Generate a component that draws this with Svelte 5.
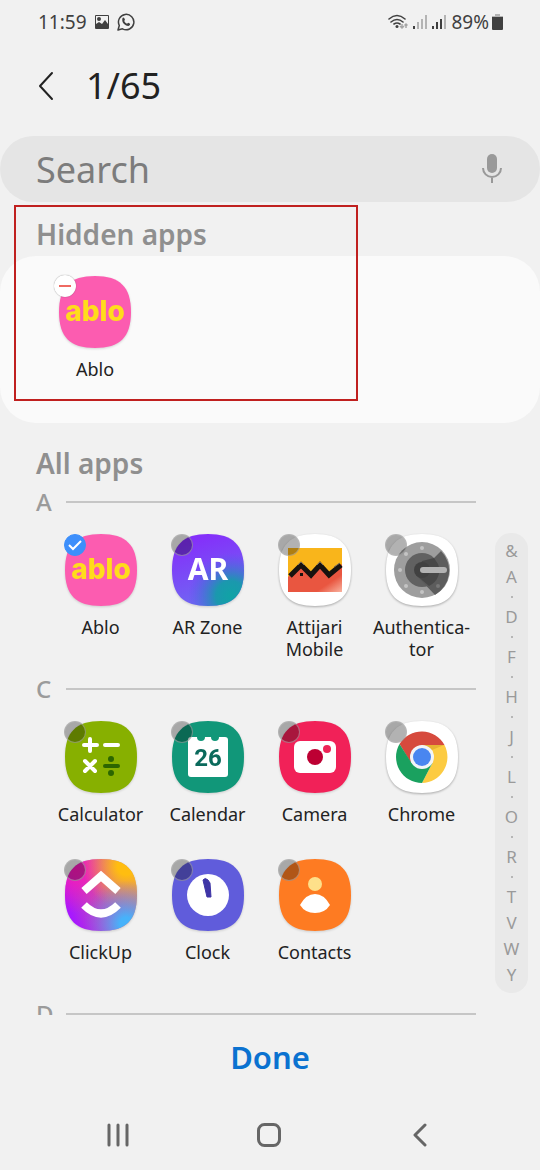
<script lang="ts">
  type App = { id: string; name: string; hidden?: boolean };

  const total = 65;

  let query = $state('');
  let groups = $state<{ letter: string; apps: App[] }[]>([
    {
      letter: 'A',
      apps: [
        { id: 'ablo', name: 'Ablo', hidden: true },
        { id: 'arzone', name: 'AR Zone' },
        { id: 'attijari', name: 'Attijari\nMobile' },
        { id: 'authenticator', name: 'Authentica-\ntor' }
      ]
    },
    {
      letter: 'C',
      apps: [
        { id: 'calculator', name: 'Calculator' },
        { id: 'calendar', name: 'Calendar' },
        { id: 'camera', name: 'Camera' },
        { id: 'chrome', name: 'Chrome' },
        { id: 'clickup', name: 'ClickUp' },
        { id: 'clock', name: 'Clock' },
        { id: 'contacts', name: 'Contacts' }
      ]
    },
    { letter: 'D', apps: [] }
  ]);

  let hiddenApps = $derived(groups.flatMap((g) => g.apps).filter((a) => a.hidden));

  const index = '&A.D.F.H.J.L.O.R.TVWY'.split('');
  const squircle = 'M36 0C61 0 72 11 72 36S61 72 36 72 0 61 0 36 11 0 36 0Z';
</script>

{#snippet appIcon(id: string)}
  <svg class="app-icon" class:plain={['attijari', 'authenticator', 'chrome'].includes(id)} viewBox="0 0 72 72" aria-hidden="true">
    {#if id === 'ablo'}
      <path d={squircle} fill="#fc5cb0" />
      <text class="ablo" x="36" y="45" text-anchor="middle">ablo</text>
    {:else if id === 'arzone'}
      <defs>
        <linearGradient id="ar-base" x1="0.2" y1="0" x2="0.5" y2="1">
          <stop offset="0.1" stop-color="#8430fa" />
          <stop offset="1" stop-color="#6f69f2" />
        </linearGradient>
        <radialGradient id="ar-teal" cx="0.82" cy="0.86" r="0.6">
          <stop offset="0" stop-color="#10a3a5" />
          <stop offset="0.35" stop-color="#1b98ae" />
          <stop offset="1" stop-color="#4d5be8" stop-opacity="0" />
        </radialGradient>
      </defs>
      <path d={squircle} fill="url(#ar-base)" />
      <path d={squircle} fill="url(#ar-teal)" />
      <text class="ar" x="36" y="46" text-anchor="middle">AR</text>
    {:else if id === 'attijari'}
      <defs>
        <linearGradient id="att-red" x1="0.5" y1="0.4" x2="1" y2="1">
          <stop offset="0.6" stop-color="#e95640" />
          <stop offset="1" stop-color="#f9b3a0" />
        </linearGradient>
      </defs>
      <path d={squircle} fill="#fff" />
      <path d="M9 14h54v44H9z" fill="url(#att-red)" />
      <path d="M9 14h54v16L50 41 41 31l-9 10-10-10-13 12z" fill="#f9b51b" />
      <path d="M11 42L22 31l10 10 9-10 9 10 12-10" fill="none" stroke="#17120f" stroke-width="5" />
      <path d="M19 31l3-3 3 3M38 31l3-3 3 3M55 33l6-4" fill="none" stroke="#75695c" stroke-width="1" />
      <path d="M18 41l4-4 4 4v2h-8z" fill="#e95640" />
      <path d="M21 39h3v3h-3z" fill="#17120f" />
    {:else if id === 'authenticator'}
      <path d={squircle} fill="#fff" />
      <circle cx="36" cy="36" r="28" fill="#9e9e9e" />
      <circle cx="36" cy="36" r="17" fill="#616161" />
      <path d="M55 17a28 28 0 0 1-6 44L30 41l5-9 13-8z" fill="#5c5c5c" />
      <path d="M52 30a17 17 0 0 1-9 22L30 41l6-14 12-3z" fill="#484848" />
      <circle cx="36" cy="36" r="8" fill="#414141" />
      <g fill="#c4c4c4">
        <circle cx="36" cy="14" r="2" /><circle cx="36" cy="58" r="2" /><circle cx="14" cy="36" r="2" />
        <circle cx="20" cy="20" r="2" /><circle cx="20" cy="52" r="2" />
      </g>
      <circle cx="52" cy="52" r="2" fill="#777" />
      <rect x="34" y="33" width="27" height="6" rx="3" fill="#b3b3b3" />
    {:else if id === 'calculator'}
      <path d={squircle} fill="#87b000" />
      <g fill="none" stroke="#fff" stroke-width="4" stroke-linecap="round">
        <path d="M25 18v12M19 24h13M40 24h13M20 40l10 10M30 40L20 50" />
        <path d="M40 45h13" stroke="#2c6600" />
      </g>
      <circle cx="46" cy="38" r="3" fill="#2c6600" />
      <circle cx="46" cy="52" r="3" fill="#2c6600" />
    {:else if id === 'calendar'}
      <path d={squircle} fill="#119779" />
      <rect x="16" y="16" width="40" height="40" rx="3" fill="#fff" />
      <circle cx="29" cy="16" r="4" fill="#119779" /><circle cx="43" cy="16" r="4" fill="#119779" />
      <text class="date" x="36" y="45" text-anchor="middle">26</text>
    {:else if id === 'camera'}
      <path d={squircle} fill="#f12158" />
      <rect x="15" y="20" width="42" height="32" rx="6" fill="#fff" />
      <circle cx="36" cy="36" r="8" fill="#bd0033" />
      <circle cx="48" cy="28" r="4" fill="#ed2457" />
    {:else if id === 'chrome'}
      <path d={squircle} fill="#fff" />
      <path d="M13.500 23A26 26 0 0 1 58.500 24H36L25 42z" fill="#d64a3d" />
      <path d="M58.500 24A26 26 0 0 1 36 62L46.400 42 46.400 30 36 24z" fill="#fccb42" />
      <path d="M13.500 23A26 26 0 0 0 36 62L46.400 42H25.600z" fill="#1aa15f" />
      <path d="M36 24h22l-12 5z" fill="#e7b432" />
      <circle cx="36" cy="36" r="12" fill="#f2f4f7" />
      <circle cx="36" cy="36" r="9" fill="#4986f0" />
    {:else if id === 'clickup'}
      <defs>
        <linearGradient id="cu-base" x1="0" y1="0.7" x2="1" y2="0.3">
          <stop offset="0.05" stop-color="#a818ff" />
          <stop offset="0.5" stop-color="#c45ca8" />
          <stop offset="1" stop-color="#d5a062" />
        </linearGradient>
        <radialGradient id="cu-pink" cx="0.15" cy="0.15" r="0.6">
          <stop offset="0" stop-color="#fb16b8" />
          <stop offset="1" stop-color="#fb16b8" stop-opacity="0" />
        </radialGradient>
        <radialGradient id="cu-gold" cx="0.85" cy="0.1" r="0.6">
          <stop offset="0.2" stop-color="#ffbd10" />
          <stop offset="1" stop-color="#ff9440" stop-opacity="0" />
        </radialGradient>
        <radialGradient id="cu-blue" cx="0.85" cy="0.9" r="0.6">
          <stop offset="0.15" stop-color="#47b2fa" />
          <stop offset="1" stop-color="#7b61ff" stop-opacity="0" />
        </radialGradient>
      </defs>
      <path d={squircle} fill="url(#cu-base)" />
      <path d={squircle} fill="url(#cu-pink)" />
      <path d={squircle} fill="url(#cu-gold)" />
      <path d={squircle} fill="url(#cu-blue)" />
      <path d="M19 32l17-15 17 15M19 46q17 17 34 0" fill="none" stroke="#fff" stroke-width="8" />
    {:else if id === 'clock'}
      <path d={squircle} fill="#605cdb" />
      <circle cx="36" cy="36" r="21" fill="#fff" />
      <path d="M31 21q2-3 5 0l2 3 1 14h-4z" fill="#3e35a6" stroke="#3e35a6" stroke-width="1" stroke-linejoin="round" />
    {:else if id === 'contacts'}
      <path d={squircle} fill="#fe7b22" />
      <circle cx="36" cy="25" r="7" fill="#fee08a" />
      <path d="M21 46Q27 35 36 35T51 46Q46 54 36 54T21 46Z" fill="#fff" />
    {/if}
  </svg>
{/snippet}

<div class="screen">
  <div class="status">
    <span>11:59</span>
    <svg width="16" height="16" viewBox="0 0 16 16" aria-hidden="true">
      <path fill-rule="evenodd" d="M2 1h12q1 0 1 1v12q0 1-1 1H2q-1 0-1-1V2q0-1 1-1zm0 1v8l3-2 3 2 3-4 3 4V2zM5 3a2 2 0 1 1 0 4 2 2 0 0 1 0-4z" fill="#404040" />
    </svg>
    <svg width="18" height="18" viewBox="0 0 18 18" aria-hidden="true">
      <path d="M1 17l1.300-4.500A7.700 7.700 0 1 1 5.500 15.800z" fill="none" stroke="#404040" stroke-width="1.500" stroke-linejoin="round" />
      <path d="M5.500 5q1-1 1.700 0l.8 1.700-.8 1.300q1 2 2.800 2.700l1.200-1 1.900 1q.5 1.500-1.600 2.300-2 .3-4.500-2T5.500 5z" fill="#404040" />
    </svg>
    <div class="signals">
      <svg width="20" height="18" viewBox="0 0 20 18" aria-hidden="true">
        <g fill="none" stroke="#404040" stroke-width="1.600" stroke-linecap="round">
          <path d="M1 6Q9-1 17 6M3 9q6-5 12 0M6 11q3-2 6 0" />
        </g>
        <circle cx="9" cy="13.500" r="1.500" fill="#404040" />
        <path d="M14 11v4M12 13l2 2 2-2M18 15v-4M16.500 12.500L18 11l1.500 1.500" fill="none" stroke="#a5a5a5" stroke-width="1.500" />
      </svg>
      <svg width="14" height="16" viewBox="0 0 14 16" aria-hidden="true">
        <path d="M0 12h2v3H0z" fill="#404040" /><path d="M4 8h2v7H4zM8 5h2v10H8zM12 1h2v14h-2z" fill="#b4b4b4" />
      </svg>
      <svg width="14" height="16" viewBox="0 0 14 16" aria-hidden="true">
        <path d="M0 12h2v3H0zM4 8h2v7H4zM8 5h2v10H8z" fill="#404040" /><path d="M12 1h2v14h-2z" fill="#b4b4b4" />
      </svg>
      <span class="battery">
        89%
        <svg width="11" height="16" viewBox="0 0 11 16" aria-hidden="true">
          <path d="M3 0h5v2h3v2H0V2h3z" fill="#b4b4b4" /><path d="M0 3h11v12q0 1-1 1H1q-1 0-1-1z" fill="#404040" />
        </svg>
      </span>
    </div>
  </div>

  <header class="header">
    <button class="back" aria-label="Back">
      <svg width="16" height="30" viewBox="0 0 16 30"><path d="M14 2L2 15l12 13" fill="none" stroke="#222" stroke-width="2" stroke-linecap="round" stroke-linejoin="round" /></svg>
    </button>
    <h1>{hiddenApps.length}/{total}</h1>
  </header>

  <div class="search">
    <input type="text" placeholder="Search" aria-label="Search" bind:value={query} />
    <button aria-label="Voice search">
      <svg width="20" height="30" viewBox="0 0 20 30">
        <rect x="5" y="0" width="10" height="19" rx="5" fill="#999" />
        <path d="M1 14a9 9 0 0 0 18 0M10 23v6" fill="none" stroke="#999" stroke-width="2" />
      </svg>
    </button>
  </div>

  <section class="hidden-apps">
    <h2>Hidden apps</h2>
    <div class="card">
      {#each hiddenApps as app (app.id)}
        <div class="tile">
          {@render appIcon(app.id)}
          <button class="remove" aria-label="Remove {app.name}" onclick={() => (app.hidden = false)}></button>
          <span>{app.name}</span>
        </div>
      {/each}
    </div>
    <div class="highlight"></div>
  </section>

  <section class="all-apps">
    <div class="list">
      <h2>All apps</h2>
      {#each groups as group (group.letter)}
        <h3>{group.letter}</h3>
        <div class="grid">
          {#each group.apps as app (app.id)}
            <label class="tile">
              {@render appIcon(app.id)}
              <input type="checkbox" bind:checked={app.hidden} />
              {#if app.hidden}
                <svg class="tick" viewBox="0 0 22 22" aria-hidden="true"><path d="M5 11l4 4 8-8" fill="none" stroke="#fff" stroke-width="2" /></svg>
              {/if}
              <span>{app.name}</span>
            </label>
          {/each}
        </div>
      {/each}
    </div>
    <nav class="index" aria-label="Alphabet">
      {#each index as item}
        {#if item === '.'}
          <span></span>
        {:else}
          <a href="#{item}">{item}</a>
        {/if}
      {/each}
    </nav>
  </section>

  <footer>
    <button class="done">Done</button>
    <div class="navbar">
      <button aria-label="Recents">
        <svg width="24" height="24" viewBox="0 0 24 24"><path d="M3 2v20M12 2v20M21 2v20" stroke="#666" stroke-width="3" stroke-linecap="round" /></svg>
      </button>
      <button aria-label="Home">
        <svg width="24" height="24" viewBox="0 0 24 24"><rect x="1.500" y="1.500" width="21" height="21" rx="6" fill="none" stroke="#666" stroke-width="3" /></svg>
      </button>
      <button aria-label="Back">
        <svg width="24" height="24" viewBox="0 0 24 24"><path d="M17 2L7 12l10 10" fill="none" stroke="#666" stroke-width="3" stroke-linecap="round" stroke-linejoin="round" /></svg>
      </button>
    </div>
  </footer>
</div>

<style>
  :global(body) {
    background: #f1f1f1;
  }

  .screen {
    color: #222;
    display: flex;
    flex-direction: column;
    font-family: 'Noto Sans', sans-serif;
    height: 100vh;
    overflow: hidden;
  }

  .screen * {
    box-sizing: border-box;
  }

  button {
    background: none;
    border: 0;
    color: inherit;
    cursor: pointer;
    font: inherit;
    padding: 0;
  }

  svg {
    display: block;
    flex: none;
  }

  .status {
    align-items: center;
    color: #404040;
    display: flex;
    flex: none;
    font-size: 19px;
    gap: 7px;
    height: 44px;
    padding: 0 37px 0 38px;
  }

  .signals {
    align-items: center;
    display: flex;
    gap: 5px;
    margin-left: auto;
  }

  .battery {
    align-items: center;
    display: flex;
    gap: 3px;
  }

  .header {
    align-items: center;
    display: flex;
    flex: none;
    gap: 32px;
    height: 92px;
    padding: 0 38px 8px;
  }

  h1,
  h2,
  h3 {
    font-weight: 400;
    margin: 0;
  }

  h1 {
    font-size: 36px;
    line-height: 44px;
  }

  .search {
    align-items: center;
    background: #e5e5e5;
    border-radius: 33px;
    display: flex;
    flex: none;
    height: 66px;
    padding: 0 38px 0 36px;
  }

  .search input {
    background: none;
    border: 0;
    color: #222;
    flex: 1;
    font: inherit;
    font-size: 36px;
    min-width: 0;
    outline: none;
    padding: 0;
  }

  .search input::placeholder {
    color: #7c7c7c;
    opacity: 1;
  }

  h2 {
    color: #8f8f8f;
    font-size: 28px;
    font-weight: 600;
    line-height: 40px;
    padding-left: 36px;
  }

  .hidden-apps {
    flex: none;
    padding-top: 12px;
    position: relative;
  }

  .card {
    background: #fafafa;
    border-radius: 36px;
    display: flex;
    margin-top: 2px;
    min-height: 167px;
    padding: 20px 42px;
  }

  /* red frame drawn over the hidden apps area */
  .highlight {
    border: 2px solid #c0201f;
    height: 196px;
    left: 14px;
    pointer-events: none;
    position: absolute;
    top: 3px;
    width: 344px;
  }

  .tile {
    align-items: center;
    display: flex;
    flex-direction: column;
    gap: 10px;
    position: relative;
    width: 106px;
  }

  .tile span {
    font-size: 18px;
    line-height: 22px;
    min-height: 44px;
    text-align: center;
    white-space: pre-line;
  }

  .app-icon {
    filter: drop-shadow(0 1px 1px rgba(0, 0, 0, 0.15));
    height: 72px;
    width: 72px;
  }

  .app-icon.plain {
    filter: drop-shadow(0 1px 1px rgba(0, 0, 0, 0.3));
  }

  .ablo {
    fill: #ffdc1c;
    font-family: Inter, sans-serif;
    font-size: 28px;
    font-weight: 800;
  }

  .ar {
    fill: #fff;
    font-size: 30px;
    font-weight: 700;
  }

  .date {
    fill: #0b6a5c;
    font-family: Roboto, sans-serif;
    font-size: 24px;
    font-weight: 700;
  }

  .remove {
    background: #fff;
    border-radius: 50%;
    box-shadow: 0 0 1px rgba(0, 0, 0, 0.5);
    height: 22px;
    left: 12px;
    position: absolute;
    top: -1px;
    width: 22px;
  }

  .remove::before {
    background: #ef6a62;
    content: '';
    display: block;
    height: 2px;
    margin: 0 auto;
    width: 12px;
  }

  .tile input,
  .tick {
    height: 22px;
    left: 17px;
    margin: 0;
    position: absolute;
    top: 0;
    width: 22px;
  }

  .tile input {
    appearance: none;
    background: rgba(0, 0, 0, 0.3);
    border: 1px solid rgba(190, 190, 190, 0.5);
    border-radius: 50%;
  }

  .tile input:checked {
    background: #3d8ffb;
    border-color: #3d8ffb;
  }

  .tick {
    pointer-events: none;
  }

  .all-apps {
    display: flex;
    flex: 1;
    gap: 19px;
    min-height: 0;
    overflow: hidden;
    padding-right: 12px;
  }

  .list {
    flex: 1;
    padding-top: 20px;
  }

  h3 {
    align-items: center;
    color: #9b9b9b;
    display: grid;
    font-size: 24px;
    font-weight: 500;
    grid-template-columns: 30px 1fr;
    line-height: 32px;
    margin: 13px 0 16px 36px;
  }

  h2 + h3 {
    margin-top: 3px;
  }

  h3::before {
    background: #c6c6c6;
    content: '';
    height: 2px;
    order: 1;
  }

  .grid {
    display: grid;
    grid-template-columns: repeat(4, 1fr);
    padding: 0 1px 0 47px;
    row-gap: 12px;
  }

  .grid .tile {
    width: auto;
  }

  .index {
    align-self: flex-start;
    background: #e9e9e9;
    border-radius: 16px;
    display: flex;
    flex: none;
    flex-direction: column;
    margin-top: 110px;
    padding: 5px 0;
    text-align: center;
    width: 33px;
  }

  .index a {
    color: #9a9a9a;
    font-size: 17px;
    line-height: 26px;
    text-decoration: none;
  }

  .index span {
    align-self: center;
    background: #a5a5a5;
    border-radius: 50%;
    height: 2px;
    margin: 6px 0;
    width: 2px;
  }

  footer {
    flex: none;
  }

  .done {
    color: #0b72d0;
    display: block;
    font-size: 31px;
    font-weight: 600;
    line-height: 44px;
    margin: 0 auto;
    padding: 20px 24px 21px;
  }

  .navbar {
    align-items: center;
    display: flex;
    height: 70px;
    justify-content: space-between;
    padding: 0 108px 0 106px;
  }
</style>
